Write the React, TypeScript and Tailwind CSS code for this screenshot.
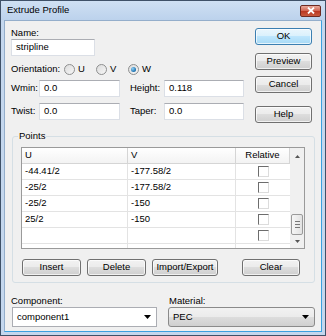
import React from 'react';

const font = "font-['Liberation_Sans',Arial,sans-serif]";

const btnGrad = 'bg-[linear-gradient(#f2f2f2,#ebebeb_50%,#dddddd_50%,#cfcfcf)] border-[#707070]';
const okGrad = 'bg-[linear-gradient(#eaf6fd,#d9f0fc_50%,#bee6fd_50%,#a7d9f5)] border-[#3c7fb1]';

function Button({ label, className = '', primary = false }: { label: string; className?: string; primary?: boolean }) {
  return (
    <div
      className={`h-[17px] rounded-[3px] border flex items-center justify-center text-[9.5px] text-black shadow-[inset_0_0_0_1px_rgba(255,255,255,0.7)] ${
        primary ? okGrad : btnGrad
      } ${className}`}
    >
      {label}
    </div>
  );
}

function TextBox({ value, className = '' }: { value: string; className?: string }) {
  return (
    <div
      className={`h-[17px] bg-white border border-[#dbdfe6] border-t-[#abadb3] flex items-center pl-[4px] text-[9.5px] text-black ${className}`}
    >
      {value}
    </div>
  );
}

function Radio({ label, checked = false }: { label: string; checked?: boolean }) {
  return (
    <div className="w-[32px] flex items-center gap-[3px]">
      <div className="w-[11px] h-[11px] rounded-full border border-[#8e8f8f] bg-[linear-gradient(135deg,#dcdcdc,#f6f6f6)] flex items-center justify-center">
        {checked && (
          <div className="w-[5px] h-[5px] rounded-full bg-[radial-gradient(circle_at_35%_35%,#8fd0f5,#1a6fae_70%,#0f4f85)]" />
        )}
      </div>
      <span>{label}</span>
    </div>
  );
}

function Check() {
  return (
    <div className="w-[11px] h-[11px] bg-white border border-[#dcdcdc] border-t-[#6d6d6d] border-l-[#6d6d6d]" />
  );
}

const rows = [
  ['-44.41/2', '-177.58/2'],
  ['-25/2', '-177.58/2'],
  ['-25/2', '-150'],
  ['25/2', '-150'],
  ['', ''],
];

function Select({ value, flat = false, className = '' }: { value: string; flat?: boolean; className?: string }) {
  return (
    <div
      className={`h-[20px] flex items-center justify-between pl-[4px] pr-[5px] text-[9.5px] text-black border ${
        flat
          ? 'bg-white border-[#abadb3]'
          : 'rounded-[3px] border-[#8a8a8a] bg-[linear-gradient(#f2f2f2,#ebebeb_50%,#dddddd_50%,#cfcfcf)]'
      } ${className}`}
    >
      <span>{value}</span>
      <svg width="7" height="4" viewBox="0 0 7 4">
        <path d="M0 0h7L3.5 4z" fill="#000" />
      </svg>
    </div>
  );
}

export default function App() {
  return (
    <div className={`w-[326px] h-[336px] bg-[#c4d7ee] border border-[#3f5168] flex flex-col ${font}`}>
      {/* Title bar */}
      <div className="h-[19px] flex items-center justify-between pl-[6px] pr-[4px] bg-[linear-gradient(#cfe0f3,#bcd2ec)]">
        <span className="text-[9.5px] text-black">Extrude Profile</span>
        <div className="w-[21px] h-[12px] rounded-[2px] border border-[#6d2a22] bg-[linear-gradient(#e9a99b,#d0624f_50%,#b9341f_50%,#c85a3d)] flex items-center justify-center">
          <svg width="8" height="7" viewBox="0 0 8 7">
            <path d="M1 0.5L7 6.5M7 0.5L1 6.5" stroke="#fff" strokeWidth="1.8" />
          </svg>
        </div>
      </div>

      {/* Client area */}
      <div className="flex-1 mx-[3px] mb-[3px] border border-[#94aecb] border-b-[#3aa0e0] border-r-[#3aa0e0] bg-[#f0f0f0] flex flex-col text-[9.5px] text-black">
        <div className="flex pl-[6px] pr-[9px]">
          <div className="w-[233px] pt-[6px] flex flex-col">
            <div className="h-[12px] leading-[12px]">Name:</div>
            <TextBox value="stripline" className="w-[84px]" />
            <div className="mt-[5px] h-[16px] flex items-center">
              <span className="w-[53px]">Orientation:</span>
              <Radio label="U" />
              <Radio label="V" />
              <Radio label="W" checked />
            </div>
            <div className="mt-[3px] flex items-center">
              <span className="w-[28px]">Wmin:</span>
              <TextBox value="0.0" className="w-[81px]" />
              <span className="w-[34px] ml-[10px]">Height:</span>
              <TextBox value="0.118" className="w-[80px]" />
            </div>
            <div className="mt-[6px] flex items-center">
              <span className="w-[28px]">Twist:</span>
              <TextBox value="0.0" className="w-[81px]" />
              <span className="w-[34px] ml-[10px]">Taper:</span>
              <TextBox value="0.0" className="w-[80px]" />
            </div>
          </div>
          <div className="ml-auto w-[57px] pt-[7px] flex flex-col">
            <Button label="OK" primary className="h-[16px]" />
            <Button label="Preview" className="h-[16px] mt-[8px]" />
            <Button label="Cancel" className="h-[16px] mt-[6px]" />
            <Button label="Help" className="h-[16px] mt-[13px]" />
          </div>
        </div>

        {/* Points group */}
        <div className="relative mt-[13px] ml-[7px] mr-[6px] border border-[#d5dfe5] rounded-[3px] pt-[10px] pl-[8px] pr-[9px] pb-[6px]">
          <span className="absolute left-[5px] top-[-7px] px-[1px] bg-[#f0f0f0] leading-[12px]">Points</span>
          <div className="h-[102px] border border-[#9a9a9a] bg-white flex">
            <div className="flex-1 flex flex-col">
              <div className="h-[16px] flex border-b border-[#d5d5d5] bg-[linear-gradient(#ffffff,#f3f3f3)]">
                <div className="w-[106px] pl-[3px] flex items-center border-r border-[#d5d5d5]">U</div>
                <div className="w-[108px] pl-[3px] flex items-center border-r border-[#d5d5d5]">V</div>
                <div className="flex-1 flex items-center justify-center border-r border-[#d5d5d5]">Relative</div>
              </div>
              {rows.map((r, i) => (
                <div key={i} className="h-[16px] flex border-b border-[#e3e3e3]">
                  <div className="w-[106px] pl-[3px] flex items-center border-r border-[#e3e3e3]">{r[0]}</div>
                  <div className="w-[108px] pl-[3px] flex items-center border-r border-[#e3e3e3]">{r[1]}</div>
                  <div className="flex-1 flex items-center justify-center">
                    <Check />
                  </div>
                </div>
              ))}
              <div className="flex-1 flex">
                <div className="w-[106px] border-r border-[#e3e3e3]" />
                <div className="w-[108px] border-r border-[#e3e3e3]" />
              </div>
            </div>
            {/* Scrollbar */}
            <div className="w-[14px] bg-[#f0f0f0] flex flex-col items-center">
              <div className="h-[16px] flex items-center justify-center">
                <svg width="5" height="3" viewBox="0 0 5 3">
                  <path d="M0 3L2.5 0L5 3z" fill="#555" />
                </svg>
              </div>
              <div className="mt-[50px] w-[12px] h-[21px] rounded-[2px] border border-[#9a9a9a] bg-[linear-gradient(90deg,#f6f6f6,#e2e2e2)] flex flex-col items-center justify-center gap-[2px]">
                <div className="w-[5px] h-px bg-[#777]" />
                <div className="w-[5px] h-px bg-[#777]" />
                <div className="w-[5px] h-px bg-[#777]" />
              </div>
              <div className="mt-auto h-[13px] flex items-center justify-center">
                <svg width="5" height="3" viewBox="0 0 5 3">
                  <path d="M0 0L2.5 3L5 0z" fill="#555" />
                </svg>
              </div>
            </div>
          </div>
          <div className="mt-[10px] flex">
            <Button label="Insert" className="ml-[1px] w-[59px]" />
            <Button label="Delete" className="ml-[6px] w-[59px]" />
            <Button label="Import/Export" className="ml-[6px] w-[66px]" />
            <Button label="Clear" className="ml-[24px] w-[58px]" />
          </div>
        </div>

        {/* Component / Material */}
        <div className="mt-[12px] flex pl-[6px]">
          <div className="flex flex-col">
            <div className="h-[12px] leading-[12px]">Component:</div>
            <Select value="component1" flat className="ml-[1px] w-[145px]" />
          </div>
          <div className="ml-[11px] flex flex-col">
            <div className="h-[12px] leading-[12px] pl-[1px]">Material:</div>
            <Select value="PEC" className="w-[147px]" />
          </div>
        </div>
      </div>
    </div>
  );
}
